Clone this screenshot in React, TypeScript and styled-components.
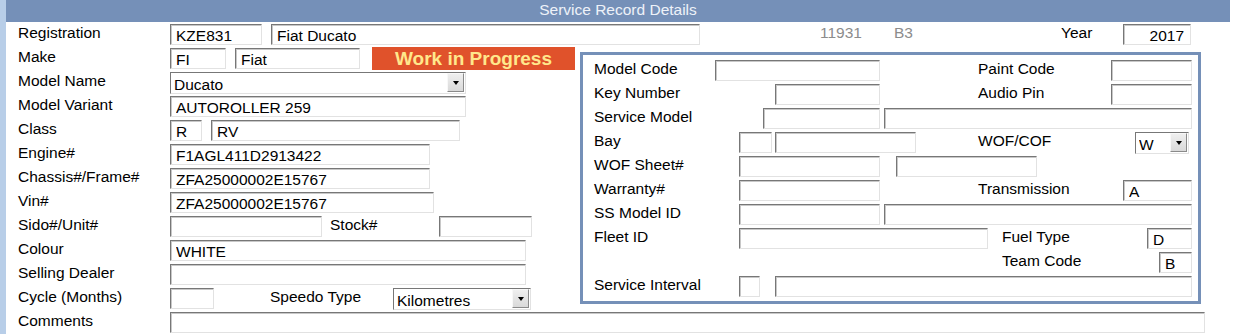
import React from "react";
import styled, { createGlobalStyle } from "styled-components";

const GlobalStyle = createGlobalStyle`
  body {
    margin: 0;
    background: #fff;
    font-family: "Liberation Sans", Arial, sans-serif;
    font-size: 15.5px;
    color: #000;
  }
`;

const Page = styled.div`
  width: 1224px;
  min-height: 334px;
  border-left: 6px solid #b8cee8;
`;

const Header = styled.div`
  height: 22px;
  line-height: 20px;
  background: #7590b8;
  color: #eef2f8;
  text-align: center;
`;

const Row = styled.div<{ $indent?: number }>`
  display: flex;
  align-items: flex-start;
  height: 24px;
  padding-left: ${(p) => p.$indent ?? 12}px;
`;

const Label = styled.span<{ $w?: number; $ml?: number; $muted?: boolean }>`
  flex-shrink: 0;
  width: ${(p) => (p.$w ? `${p.$w}px` : "auto")};
  margin-left: ${(p) => p.$ml ?? 0}px;
  padding-top: 2px;
  line-height: 18px;
  white-space: nowrap;
  color: ${(p) => (p.$muted ? "#8c8c8c" : "#000")};
`;

const Field = styled.input<{ $w: number; $ml?: number; $right?: boolean }>`
  flex-shrink: 0;
  box-sizing: border-box;
  width: ${(p) => p.$w}px;
  height: 21px;
  margin: 2px 0 0 ${(p) => p.$ml ?? 0}px;
  padding: 2px ${(p) => (p.$right ? 6 : 3)}px 0 5px;
  border: 1px solid;
  border-color: #777 #e2e2e2 #e2e2e2 #777;
  box-shadow: inset 1px 1px 0 #c8c8c8;
  font: inherit;
  line-height: 17px;
  color: #000;
  text-align: ${(p) => (p.$right ? "right" : "left")};
  background: #fff;
  outline: none;
`;

const SelectBox = styled.div<{ $w: number; $ml?: number }>`
  display: flex;
  flex-shrink: 0;
  box-sizing: border-box;
  width: ${(p) => p.$w}px;
  height: 22px;
  margin: 2px 0 0 ${(p) => p.$ml ?? 0}px;
  border: 1px solid;
  border-color: #777 #e2e2e2 #e2e2e2 #777;
  background: #fff;
`;

const SelectField = styled.select`
  flex: 1;
  min-width: 0;
  appearance: none;
  border: 0;
  padding: 2px 0 0 3px;
  background: transparent;
  font: inherit;
  line-height: 17px;
  color: #000;
  outline: none;
`;

const DropButton = styled.span`
  display: flex;
  align-items: center;
  justify-content: center;
  width: 15px;
  margin: 0 1px 1px 0;
  border: 1px solid;
  border-color: #f8f8f8 #8a8a8a #8a8a8a #f8f8f8;
  background: linear-gradient(#efefef, #d9d9d9);

  &::after {
    content: "";
    border-left: 3.5px solid transparent;
    border-right: 3.5px solid transparent;
    border-top: 4px solid #000;
  }
`;

const Badge = styled.div`
  flex-shrink: 0;
  width: 203px;
  height: 23px;
  margin: 1px 0 0 12px;
  background: #e0522b;
  color: #ffe88c;
  font-size: 19px;
  font-weight: bold;
  line-height: 23px;
  text-align: center;
`;

const Middle = styled.div`
  display: grid;
  grid-template-columns: 574px 621px;
`;

const LeftColumn = styled.div`
  display: flex;
  flex-direction: column;
`;

const Panel = styled.div`
  box-sizing: border-box;
  height: 252px;
  margin-top: 6px;
  padding: 3px 0;
  border: 3px solid #7590b8;
`;

type SelectProps = { w: number; ml?: number; value: string; options: string[] };

const Select: React.FC<SelectProps> = ({ w, ml, value, options }) => (
  <SelectBox $w={w} $ml={ml}>
    <SelectField defaultValue={value}>
      {options.map((o) => (
        <option key={o}>{o}</option>
      ))}
    </SelectField>
    <DropButton />
  </SelectBox>
);

const App: React.FC = () => {
  return (
    <>
      <GlobalStyle />
      <Page>
        <Header>Service Record Details</Header>

        <Row>
          <Label $w={152}>Registration</Label>
          <Field $w={92} defaultValue="KZE831" />
          <Field $w={429} $ml={9} defaultValue="Fiat Ducato" />
          <Label $w={74} $ml={120} $muted>11931</Label>
          <Label $w={167} $muted>B3</Label>
          <Label $w={62}>Year</Label>
          <Field $w={68} $right defaultValue="2017" />
        </Row>

        <Middle>
          <LeftColumn>
            <Row>
              <Label $w={152}>Make</Label>
              <Field $w={56} defaultValue="FI" />
              <Field $w={125} $ml={9} defaultValue="Fiat" />
              <Badge>Work in Progress</Badge>
            </Row>
            <Row>
              <Label $w={152}>Model Name</Label>
              <Select w={296} value="Ducato" options={["Ducato", "Doblo", "Scudo"]} />
            </Row>
            <Row>
              <Label $w={152}>Model Variant</Label>
              <Field $w={296} defaultValue="AUTOROLLER 259" />
            </Row>
            <Row>
              <Label $w={152}>Class</Label>
              <Field $w={32} defaultValue="R" />
              <Field $w={249} $ml={9} defaultValue="RV" />
            </Row>
            <Row>
              <Label $w={152}>Engine#</Label>
              <Field $w={260} defaultValue="F1AGL411D2913422" />
            </Row>
            <Row>
              <Label $w={152}>Chassis#/Frame#</Label>
              <Field $w={260} defaultValue="ZFA25000002E15767" />
            </Row>
            <Row>
              <Label $w={152}>Vin#</Label>
              <Field $w={264} defaultValue="ZFA25000002E15767" />
            </Row>
            <Row>
              <Label $w={152}>Sido#/Unit#</Label>
              <Field $w={152} />
              <Label $w={109} $ml={8}>Stock#</Label>
              <Field $w={93} />
            </Row>
            <Row>
              <Label $w={152}>Colour</Label>
              <Field $w={356} defaultValue="WHITE" />
            </Row>
            <Row>
              <Label $w={152}>Selling Dealer</Label>
              <Field $w={356} />
            </Row>
            <Row>
              <Label $w={152}>Cycle (Months)</Label>
              <Field $w={44} />
              <Label $w={123} $ml={56}>Speedo Type</Label>
              <Select w={138} value="Kilometres" options={["Kilometres", "Miles"]} />
            </Row>
          </LeftColumn>

          <Panel>
            <Row $indent={11}>
              <Label $w={121}>Model Code</Label>
              <Field $w={165} />
              <Label $w={133} $ml={98}>Paint Code</Label>
              <Field $w={81} />
            </Row>
            <Row $indent={11}>
              <Label $w={181}>Key Number</Label>
              <Field $w={105} />
              <Label $w={133} $ml={98}>Audio Pin</Label>
              <Field $w={81} />
            </Row>
            <Row $indent={11}>
              <Label $w={169}>Service Model</Label>
              <Field $w={117} />
              <Field $w={308} $ml={4} />
            </Row>
            <Row $indent={11}>
              <Label $w={145}>Bay</Label>
              <Field $w={33} />
              <Field $w={141} $ml={3} />
              <Label $w={157} $ml={62}>WOF/COF</Label>
              <Select w={54} value="W" options={["W", "C"]} />
            </Row>
            <Row $indent={11}>
              <Label $w={145}>WOF Sheet#</Label>
              <Field $w={141} />
              <Field $w={141} $ml={16} />
            </Row>
            <Row $indent={11}>
              <Label $w={145}>Warranty#</Label>
              <Field $w={141} />
              <Label $w={145} $ml={98}>Transmission</Label>
              <Field $w={69} defaultValue="A" />
            </Row>
            <Row $indent={11}>
              <Label $w={145}>SS Model ID</Label>
              <Field $w={141} />
              <Field $w={308} $ml={4} />
            </Row>
            <Row $indent={11}>
              <Label $w={145}>Fleet ID</Label>
              <Field $w={249} />
              <Label $w={145} $ml={14}>Fuel Type</Label>
              <Field $w={45} defaultValue="D" />
            </Row>
            <Row $indent={419}>
              <Label $w={157}>Team Code</Label>
              <Field $w={33} defaultValue="B" />
            </Row>
            <Row $indent={11}>
              <Label $w={145}>Service Interval</Label>
              <Field $w={21} />
              <Field $w={417} $ml={15} />
            </Row>
          </Panel>
        </Middle>

        <Row>
          <Label $w={152}>Comments</Label>
          <Field $w={1035} />
        </Row>
      </Page>
    </>
  );
};

export default App;
